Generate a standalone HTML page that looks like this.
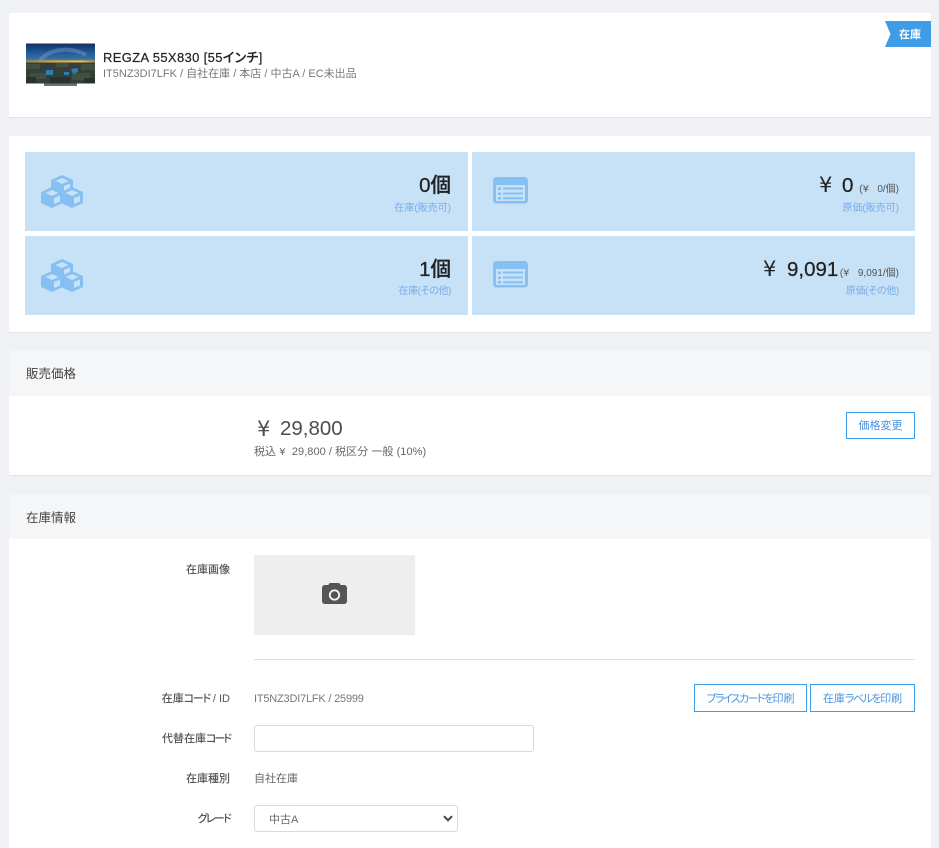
<!DOCTYPE html>
<html lang="ja">
<head>
<meta charset="utf-8">
<title>在庫</title>
<style>
html,body{margin:0;padding:0}
body{width:939px;height:848px;overflow:hidden;background:#f0f1f5;position:relative;font-family:"Liberation Sans","Noto Sans CJK JP",sans-serif;color:#555;font-feature-settings:"palt"}
.a{position:absolute;white-space:nowrap;line-height:1}
.card{position:absolute;left:9px;width:922px;background:#fff;box-shadow:0 1px 0 #e2e3e8}
.tile{position:absolute;width:443px;height:79px;background:#c7e1f7}
.hd{position:absolute;left:9px;width:922px;background:#f5f6f8}
.r{text-align:right}
.lab{position:absolute;right:709px;font-size:11px;line-height:13px;color:#555;white-space:nowrap;font-weight:500}
.btn{position:absolute;box-sizing:border-box;border:1px solid #3f9de8;background:#fff;color:#4a93e0;font-size:11px;text-align:center;white-space:nowrap}
.blue{color:#78aee8;font-size:10px;line-height:13px}
.big{color:#222;font-size:20.500px;font-weight:500;line-height:24px;-webkit-text-stroke:.25px #222}
.yen{font-family:"DejaVu Sans",sans-serif;font-size:21px;line-height:24px;color:#222}
.sm{color:#555;font-size:10px;line-height:12px}
.y{font-family:"DejaVu Sans",sans-serif;font-size:10px}
</style>
</head>
<body>

<div class="card" style="top:13px;height:104px"></div>
<svg class="a" style="left:26px;top:43px" width="70" height="44" viewBox="0 0 70 44">
<defs>
<linearGradient id="s" x1="0" y1="0" x2="0" y2="1">
<stop offset="0" stop-color="#16305c"/><stop offset=".5" stop-color="#1f5a9c"/><stop offset=".85" stop-color="#3a6f9a"/><stop offset="1" stop-color="#8a8f70"/>
</linearGradient>
<linearGradient id="h" x1="0" y1="0" x2="1" y2="0">
<stop offset="0" stop-color="#7d8a55"/><stop offset=".4" stop-color="#e8a830"/><stop offset=".8" stop-color="#f0c040"/><stop offset="1" stop-color="#a08a50"/>
</linearGradient>
</defs>
<rect x="0" y=".5" width="69" height="40" fill="#343f3a"/>
<rect x="0" y=".5" width="69" height="18" fill="url(#s)"/>
<path d="M14 17C24 6 44 3 60 12" fill="none" stroke="#7f9dc8" stroke-width="4" opacity=".45"/>
<rect x="0" y="17.500" width="69" height="2" fill="url(#h)"/>
<rect x="0" y="19.500" width="69" height="21" fill="#343f3a"/>
<path d="M0 21h14v5H0zM30 20h12v4H30zM55 21h14v6H55zM4 30h16v6H4zM46 30h18v7H46z" fill="#3f5040"/>
<path d="M0 34h10v6H0zM24 34h20v6H24zM58 35h11v5H58z" fill="#2a3230"/>
<path d="M20 27h7v5h-7zM45 26l7-1v4l-5 2zM38 29h5v3h-5z" fill="#2b7eb5"/>
<rect x="18" y="40.500" width="33" height="2.500" fill="#6f6f6f"/>
</svg>
<div class="a" style="left:103px;top:50px;font-size:13px;font-weight:500;color:#222;line-height:16px;letter-spacing:.35px;-webkit-text-stroke:.2px #222">REGZA 55X830 [55インチ]</div>
<div class="a" style="left:103px;top:67px;font-size:11px;color:#777;line-height:14px">IT5NZ3DI7LFK / 自社在庫 / 本店 / 中古A / EC未出品</div>
<svg class="a" style="left:885px;top:21px" width="46" height="26" viewBox="0 0 46 26"><path d="M0 0H46V26H0L5.500 13Z" fill="#3f9de8"/></svg>
<div class="a" style="left:885px;top:22px;width:50px;text-align:center;line-height:26px;font-size:11px;font-weight:700;color:#fff">在庫</div>

<div class="card" style="top:136px;height:196px"></div>
<div class="tile" style="left:25px;top:152px"></div>
<div class="tile" style="left:472px;top:152px"></div>
<div class="tile" style="left:25px;top:236px"></div>
<div class="tile" style="left:472px;top:236px"></div>

<svg class="a" style="left:41px;top:175px" width="42" height="34" viewBox="0 0 42 34">
<path d="M21 0l11 5v11l-11 5-11-5V5z" fill="#86c0f2"/><path d="M21 3l6.500 3-6.500 3-6.500-3z" fill="#c7e1f7"/><path d="M23 11l6-2.500v6L23 17z" fill="#c7e1f7"/>
<path d="M11 12l11 5v11l-11 5L0 28V17z" fill="#86c0f2"/><path d="M11 15l6.500 3-6.500 3-6.500-3z" fill="#c7e1f7"/><path d="M13 23l6-2.500v6L13 29z" fill="#c7e1f7"/>
<path d="M31 12l11 5v11l-11 5-11-5V17z" fill="#86c0f2"/><path d="M31 15l6.500 3-6.500 3-6.500-3z" fill="#c7e1f7"/><path d="M33 23l6-2.500v6L33 29z" fill="#c7e1f7"/>
</svg>
<svg class="a" style="left:41px;top:259px" width="42" height="34" viewBox="0 0 42 34">
<path d="M21 0l11 5v11l-11 5-11-5V5z" fill="#86c0f2"/><path d="M21 3l6.500 3-6.500 3-6.500-3z" fill="#c7e1f7"/><path d="M23 11l6-2.500v6L23 17z" fill="#c7e1f7"/>
<path d="M11 12l11 5v11l-11 5L0 28V17z" fill="#86c0f2"/><path d="M11 15l6.500 3-6.500 3-6.500-3z" fill="#c7e1f7"/><path d="M13 23l6-2.500v6L13 29z" fill="#c7e1f7"/>
<path d="M31 12l11 5v11l-11 5-11-5V17z" fill="#86c0f2"/><path d="M31 15l6.500 3-6.500 3-6.500-3z" fill="#c7e1f7"/><path d="M33 23l6-2.500v6L33 29z" fill="#c7e1f7"/>
</svg>
<svg class="a" style="left:493px;top:177px" width="35" height="27" viewBox="0 0 35 27">
<rect width="35" height="26.500" rx="3.500" fill="#86c0f2"/><rect x="3" y="8" width="29" height="16" fill="#c7e1f7"/>
<path d="M5 10.500h3v2.500H5zM5 15.500h3v2.500H5zM5 20h3v2.500H5zM10 10.500h20v2H10zM10 15.500h20v2H10zM10 20.200h20v2H10z" fill="#86c0f2"/>
</svg>
<svg class="a" style="left:493px;top:261px" width="35" height="27" viewBox="0 0 35 27">
<rect width="35" height="26.500" rx="3.500" fill="#86c0f2"/><rect x="3" y="8" width="29" height="16" fill="#c7e1f7"/>
<path d="M5 10.500h3v2.500H5zM5 15.500h3v2.500H5zM5 20h3v2.500H5zM10 10.500h20v2H10zM10 15.500h20v2H10zM10 20.200h20v2H10z" fill="#86c0f2"/>
</svg>

<div class="a r big" style="right:488px;top:174px">0個</div>
<div class="a r blue" style="right:488px;top:202px">在庫(販売可)</div>
<div class="a r big" style="right:488px;top:258px">1個</div>
<div class="a r blue" style="right:488px;top:285px;letter-spacing:-.4px">在庫(その他)</div>

<div class="a yen" style="left:819px;top:173px">¥</div>
<div class="a big" style="left:842px;top:174px">0</div>
<div class="a sm r" style="right:40px;top:184px">(<span class="y">¥</span>&nbsp;&nbsp;&nbsp;0/個)</div>
<div class="a r blue" style="right:40px;top:202px">原価(販売可)</div>
<div class="a yen" style="left:763px;top:257px">¥</div>
<div class="a big" style="left:787px;top:258px">9,091</div>
<div class="a sm r" style="right:40px;top:268px">(<span class="y">¥</span>&nbsp;&nbsp;&nbsp;9,091/個)</div>
<div class="a r blue" style="right:40px;top:285px;letter-spacing:-.3px">原価(その他)</div>

<div class="card" style="top:351px;height:124px"></div>
<div class="hd" style="top:351px;height:45px"></div>
<div class="a" style="left:26px;top:366px;font-size:12.500px;line-height:16px;color:#444">販売価格</div>
<div class="a yen" style="left:257px;top:417px;color:#4d4d4d">¥</div>
<div class="a" style="left:280px;top:417px;font-size:20.500px;line-height:24px;color:#4d4d4d">29,800</div>
<div class="a" style="left:254px;top:445px;font-size:11px;line-height:14px;color:#666;letter-spacing:.05px">税込 <span class="y">¥</span>&nbsp;&nbsp;29,800 / 税区分 一般 (10%)</div>
<div class="btn" style="left:846px;top:412px;width:69px;height:27px;line-height:27px">価格変更</div>

<div class="card" style="top:495px;height:353px"></div>
<div class="hd" style="top:495px;height:44px"></div>
<div class="a" style="left:26px;top:510px;font-size:12.500px;line-height:16px;color:#444">在庫情報</div>

<div class="lab" style="top:564px">在庫画像</div>
<div class="a" style="left:254px;top:555px;width:161px;height:80px;background:#eeeeee"></div>
<svg class="a" style="left:322px;top:583px" width="25" height="21" viewBox="0 0 25 21">
<path d="M3 2H6.500C6.800 .6 7.500 0 8.500 0H16.500C17.500 0 18.200 .6 18.500 2H22C23.700 2 25 3.300 25 5V18C25 19.700 23.700 21 22 21H3C1.300 21 0 19.700 0 18V5C0 3.300 1.300 2 3 2Z" fill="#555"/>
<circle cx="12.500" cy="12" r="5.600" fill="#f4f4f4"/><circle cx="12.500" cy="12" r="3.800" fill="#555"/>
</svg>
<div class="a" style="left:254px;top:659px;width:661px;height:1px;background:#dfdfdf"></div>

<div class="lab" style="top:693px">在庫<span style="letter-spacing:-1.3px">コード</span> / ID</div>
<div class="a" style="left:254px;top:693px;font-size:11px;line-height:13px;color:#777;letter-spacing:-.2px">IT5NZ3DI7LFK / 25999</div>
<div class="btn" style="left:694px;top:684px;width:113px;height:28px;line-height:28px"><span style="letter-spacing:-1.6px">プライスカードを</span>印刷</div>
<div class="btn" style="left:810px;top:684px;width:105px;height:28px;line-height:28px">在庫<span style="letter-spacing:-1.5px">ラベルを</span>印刷</div>

<div class="lab" style="top:733px">代替在庫<span style="letter-spacing:-2px">コード</span></div>
<div class="a" style="left:254px;top:725px;width:280px;height:27px;box-sizing:border-box;border:1px solid #d8d8e0;border-radius:3px;background:#fff"></div>

<div class="lab" style="top:773px">在庫種別</div>
<div class="a" style="left:254px;top:773px;font-size:11px;line-height:13px;color:#666">自社在庫</div>

<div class="lab" style="top:813px;letter-spacing:-1.700px">グレード</div>
<div class="a" style="left:254px;top:805px;width:204px;height:27px;box-sizing:border-box;border:1px solid #d8d8e0;border-radius:3px;background:#fff"></div>
<div class="a" style="left:269px;top:814px;font-size:11px;line-height:13px;color:#666">中古A</div>
<svg class="a" style="left:443px;top:815px" width="10" height="7" viewBox="0 0 10 7"><path d="M1 1.200L5 5.200L9 1.200" fill="none" stroke="#444" stroke-width="2"/></svg>

</body>
</html>
